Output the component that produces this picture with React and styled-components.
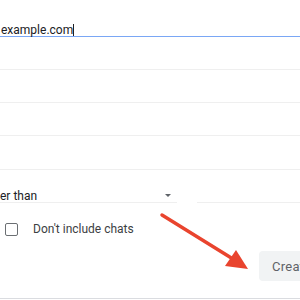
import React from 'react';
import styled, { createGlobalStyle } from 'styled-components';

const GlobalStyle = createGlobalStyle`
	html, body {
		margin: 0;
		padding: 0;
		background: #fff;
		overflow: hidden;
	}
	body {
		font-family: Roboto, "Liberation Sans", Arial, sans-serif;
	}
`;

const Page = styled.div`
	position: relative;
	width: 300px;
	height: 300px;
	overflow: hidden;
	background: #fff;
`;

const Form = styled.form`
	display: flex;
	flex-direction: column;
	padding-top: 4px;
`;

const Field = styled.div`
	box-sizing: border-box;
	display: flex;
	align-items: flex-start;
	height: ${({ $height }) => $height || 33}px;
	padding-top: ${({ $height }) => ($height || 33) - 13}px;
	padding-left: ${({ $inset }) => $inset || 0}px;
	border-bottom: 1px solid ${({ $focused }) => ($focused ? '#7aa7f5' : '#efefef')};
	font-size: 12px;
	line-height: 12px;
	color: #202124;
`;

const Caret = styled.span`
	display: inline-block;
	width: 1px;
	height: 12px;
	background: #202124;
	vertical-align: -2px;
`;

const SplitRow = styled.div`
	display: grid;
	grid-template-columns: 177px 1fr;
	column-gap: 20px;
`;

const Select = styled(Field)`
	justify-content: space-between;
	padding-right: 6px;
`;

const DropArrow = styled.span`
	width: 0;
	height: 0;
	margin-top: 4px;
	border-left: 3.5px solid transparent;
	border-right: 3.5px solid transparent;
	border-top: 3.5px solid #5f6368;
`;

const CheckRow = styled.label`
	display: flex;
	align-items: center;
	gap: 15px;
	height: 16px;
	margin-top: 18px;
	padding-left: 5px;
	font-size: 12px;
	color: #3c4043;
`;

const Box = styled.span`
	box-sizing: border-box;
	width: 13px;
	height: 13px;
	border: 1.6px solid #6b6f73;
	border-radius: 2px;
`;

const ButtonRow = styled.div`
	display: flex;
	padding-left: 259px;
	margin-top: 14px;
	height: 30px;
`;

const Button = styled.button`
	flex: none;
	height: 30px;
	padding: 0 13px;
	border: none;
	border-radius: 4px;
	background: #f1f3f4;
	color: #5f6368;
	font-family: Roboto, "Liberation Sans", Arial, sans-serif;
	font-size: 13px;
	letter-spacing: 0.25px;
	white-space: nowrap;
`;

const Footer = styled.div`
	margin-top: 17px;
	border-top: 1px solid #dadce0;
`;

const Annotation = styled.svg`
	position: absolute;
	top: 0;
	left: 0;
	pointer-events: none;
`;

export default function App() {
	return (
		<Page>
			<GlobalStyle />
			<Form>
				<Field $focused $inset={1}>
					<span>
						example.com
						<Caret />
					</span>
				</Field>
				<Field />
				<Field />
				<Field />
				<Field $height={34} />
				<SplitRow>
					<Select>
						<span>er than</span>
						<DropArrow />
					</Select>
					<Field />
				</SplitRow>
				<CheckRow>
					<Box />
					Don't include chats
				</CheckRow>
				<ButtonRow>
					<Button type="button">Create filter</Button>
				</ButtonRow>
				<Footer />
			</Form>
			<Annotation width="300" height="300" viewBox="0 0 300 300">
				<line x1="162" y1="215" x2="233" y2="259" stroke="#e9442e" strokeWidth="3.5" strokeLinecap="round" />
				<polygon points="236,250 225,266 248,269" fill="#e9442e" />
			</Annotation>
		</Page>
	);
}
